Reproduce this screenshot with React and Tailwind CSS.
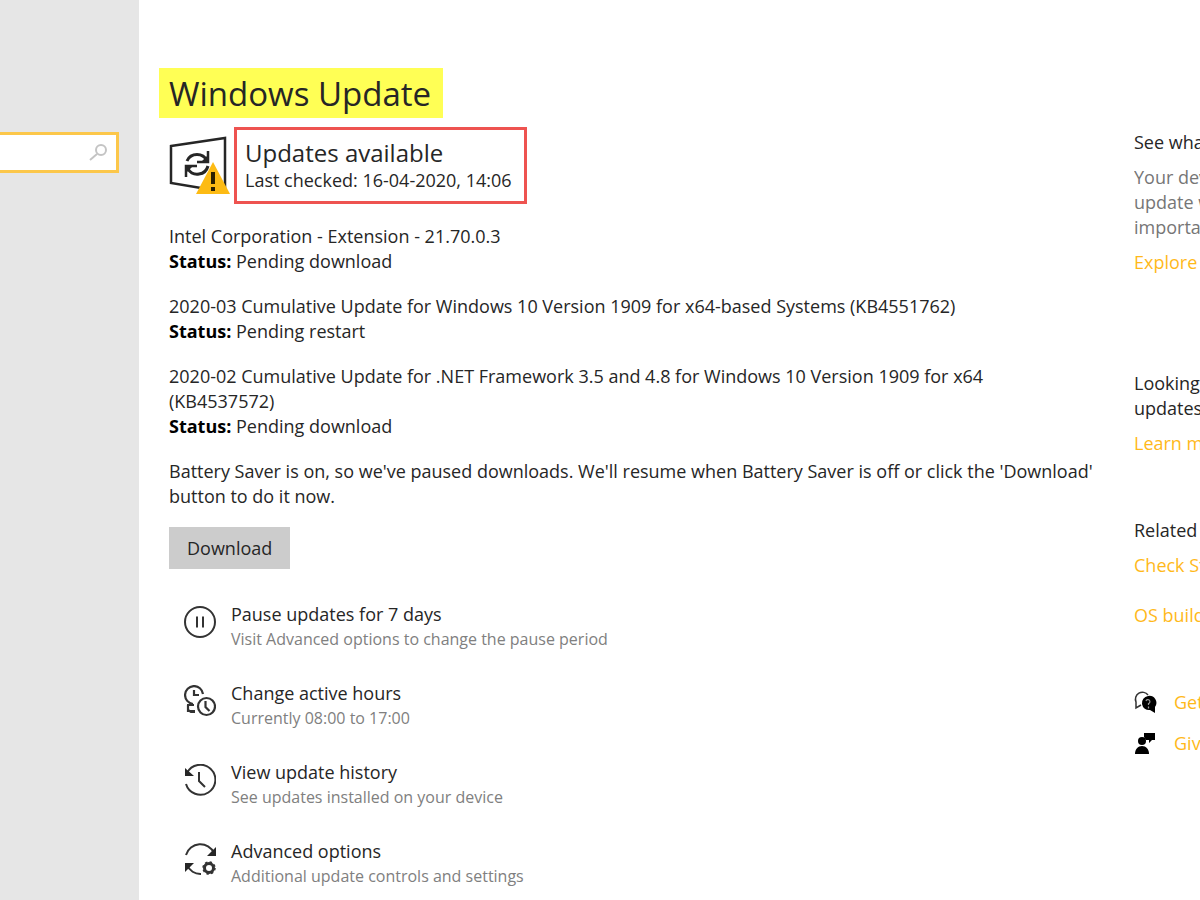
import React from 'react';

const updates = [
  { name: ['Intel Corporation - Extension - 21.70.0.3'], status: 'Pending download' },
  {
    name: ['2020-03 Cumulative Update for Windows 10 Version 1909 for x64-based Systems (KB4551762)'],
    status: 'Pending restart',
  },
  {
    name: [
      '2020-02 Cumulative Update for .NET Framework 3.5 and 4.8 for Windows 10 Version 1909 for x64',
      '(KB4537572)',
    ],
    status: 'Pending download',
  },
];

const actions = [
  { icon: PauseIcon, title: 'Pause updates for 7 days', note: 'Visit Advanced options to change the pause period' },
  { icon: HoursIcon, title: 'Change active hours', note: 'Currently 08:00 to 17:00' },
  { icon: HistoryIcon, title: 'View update history', note: 'See updates installed on your device' },
  { icon: AdvancedIcon, title: 'Advanced options', note: 'Additional update controls and settings' },
];

function UpdateIcon() {
  return (
    <svg className="w-16 h-16 shrink-0" viewBox="0 0 64 64" fill="none" aria-hidden="true">
      <path d="M2 12 56 4V58L2 49Z" stroke="#262626" strokeWidth="2.5" />
      <path d="M18 27a11 11 0 0 1 20 0M39 32a11 11 0 0 1-20 3" stroke="#262626" strokeWidth="3" />
      <path d="M39 17v11H28M17 43V32h11" stroke="#262626" strokeWidth="2.5" />
      <path d="M39 21v7h-7ZM17 39v-7h7Z" fill="#262626" />
      <path d="M44 28 61 60H27Z" fill="#fdbb14" />
      <path d="M44 38v12M44 53v4" stroke="#2b2000" strokeWidth="4" />
    </svg>
  );
}

function PauseIcon() {
  return (
    <svg className="w-8 h-8" viewBox="0 0 32 32" fill="none" stroke="#333" strokeWidth="2" aria-hidden="true">
      <circle cx="16" cy="16" r="15" />
      <path d="M13 10.5v11M19 10.5v11" />
    </svg>
  );
}

function HoursIcon() {
  return (
    <svg className="w-8 h-8" viewBox="0 0 32 32" fill="none" stroke="#333" strokeWidth="2.2" aria-hidden="true">
      <path d="M19 9A9 9 0 1 0 9 19" />
      <path d="M10 5v5h5" />
      <circle cx="22.5" cy="21.5" r="8.5" />
      <path d="M21.500 16v6l4 4" />
      <path d="M4 20v6h7M3 20h7M4 25l3 2h4" />
    </svg>
  );
}

function HistoryIcon() {
  return (
    <svg className="w-8 h-8" viewBox="0 0 32 32" fill="none" stroke="#333" strokeWidth="2" aria-hidden="true">
      <path d="M3 9a15 15 0 1 1-1 11" />
      <path d="M15 8v9l6 6" />
      <path d="M1 4v8h9Z" fill="#262626" stroke="none" />
    </svg>
  );
}

function AdvancedIcon() {
  return (
    <svg className="w-8 h-8" viewBox="0 0 32 32" fill="none" stroke="#333" strokeWidth="2" aria-hidden="true">
      <path d="M2 12a15 15 0 0 1 28-2M3 22a15 15 0 0 0 14 9" />
      <path d="M32 4v9h-9Z" fill="#262626" stroke="none" />
      <path d="M1 29v-9h9Z" fill="#262626" stroke="none" />
      <circle cx="25" cy="25" r="4.5" strokeWidth="3" />
      <circle cx="25" cy="25" r="6" strokeWidth="1.5" strokeDasharray="2.4 2.3" />
    </svg>
  );
}

function HelpIcon() {
  return (
    <svg className="w-6 h-6 shrink-0" viewBox="0 0 24 24" aria-hidden="true">
      <path d="M14 4A7 7 0 0 0 2 11v6l5-3" fill="none" stroke="#333" strokeWidth="1.5" />
      <path d="M14 5a7 7 0 0 1 7 11v6l-5-3a7 7 0 1 1-2-14Z" fill="#000" />
      <path d="M12 10a2 2 0 1 1 2.500 2.500V14M14.500 15.500v2" fill="none" stroke="#999" strokeWidth="1.200" />
    </svg>
  );
}

function FeedbackIcon() {
  return (
    <svg className="w-6 h-6 shrink-0" viewBox="0 0 24 24" fill="#000" aria-hidden="true">
      <path d="M10 1h11v7h-3l-3 3V8h-3l-2-3Z" />
      <circle cx="8" cy="9" r="4" />
      <path d="M1 22c0-5 3-8 7-8s7 3 7 8Z" />
    </svg>
  );
}

function SideLink({ children, className = '' }) {
  return (
    <a href="#" className={`block text-[#ffb91a] ${className}`}>
      {children}
    </a>
  );
}

export default function App() {
  return (
    <div className="flex min-h-screen overflow-hidden bg-white font-['Open_Sans','Noto_Sans',sans-serif] text-[18px] leading-[25px] text-[#262626]">
      <nav className="w-[139px] shrink-0 bg-[#e6e6e6] pt-[132px] pr-5">
        <label className="flex h-[41px] items-center border-[3px] border-l-0 border-[#fcc74a] bg-white pr-2">
          <input type="text" aria-label="Find a setting" className="min-w-0 flex-1 outline-none" />
          <svg className="w-5 h-5 shrink-0" viewBox="0 0 20 20" fill="none" stroke="#c4c4c4" strokeWidth="2" aria-hidden="true">
            <circle cx="13" cy="7" r="5" />
            <path d="m9 11-7 6" />
          </svg>
        </label>
      </nav>

      <main className="min-w-0 flex-1 pl-[30px] pr-8 pt-[68px]">
        <h1 className="-ml-[10px] flex h-[50px] w-fit items-center bg-[#ffff55] px-3 pl-[10px] text-[33px]">
          Windows Update
        </h1>

        <div className="mt-[9px] flex items-center gap-px">
          <UpdateIcon />
          <div className="h-[77px] border-[3px] border-[#ee5350] pl-2 pr-3 pt-2">
            <h2 className="text-[24px] leading-[30px]">Updates available</h2>
            <p>Last checked: 16-04-2020, 14:06</p>
          </div>
        </div>

        <ul className="mt-5 space-y-5">
          {updates.map((u) => (
            <li key={u.name[0]}>
              {u.name.map((line) => (
                <p key={line}>{line}</p>
              ))}
              <p>
                <b className="text-black">Status:</b> {u.status}
              </p>
            </li>
          ))}
        </ul>

        <p className="mt-5">
          Battery Saver is on, so we've paused downloads. We'll resume when Battery Saver is off or click the
          'Download' button to do it now.
        </p>

        <button type="button" className="mt-[18px] h-[42px] bg-[#cccccc] px-[18px]">
          Download
        </button>

        <div className="mt-[33px] space-y-[29px]">
          {actions.map(({ icon: Icon, title, note }) => (
            <button key={title} type="button" className="flex items-start gap-[15px] pl-[15px] text-left">
              <span className="pt-1">
                <Icon />
              </span>
              <span>
                <span className="block">{title}</span>
                <span className="block text-[16px] text-[#808080]">{note}</span>
              </span>
            </button>
          ))}
        </div>
      </main>

      <aside className="w-[66px] shrink-0 overflow-hidden whitespace-nowrap pt-[130px]">
        <h3>See what's new</h3>
        <p className="mt-[10px] text-[#767676]">
          Your device
          <br />
          update with
          <br />
          important
        </p>
        <SideLink className="mt-[10px]">Explore</SideLink>

        <h3 className="mt-24">
          Looking for
          <br />
          updates?
        </h3>
        <SideLink className="mt-[10px]">Learn more</SideLink>

        <h3 className="mt-[62px]">Related</h3>
        <SideLink className="mt-[10px]">Check Storage</SideLink>
        <SideLink className="mt-[25px]">OS build info</SideLink>

        <div className="mt-[62px] space-y-4">
          <a href="#" className="flex items-center gap-4 text-[#ffb91a]">
            <HelpIcon />
            Get help
          </a>
          <a href="#" className="flex items-center gap-4 text-[#ffb91a]">
            <FeedbackIcon />
            Give feedback
          </a>
        </div>
      </aside>
    </div>
  );
}
